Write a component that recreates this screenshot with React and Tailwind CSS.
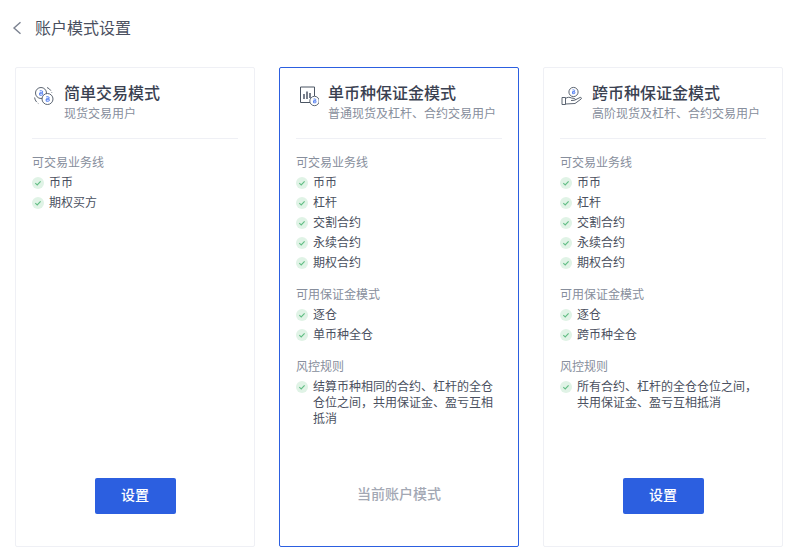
import React from 'react'

const CoinIcon = () => (
  <svg width="22" height="22" viewBox="0 0 22 22" fill="none" className="shrink-0">
    <circle cx="8" cy="8" r="5.5" stroke="#4b5563" strokeWidth="0.9" />
    <circle cx="14.5" cy="14" r="5.5" fill="#fff" stroke="#4b5563" strokeWidth="0.9" />
    <path d="M6.7 5.8h1.9a1 1 0 010 2.2H6.7m0 0h2.1a1 1 0 010 2.2H6.7z" stroke="#4f7cf0" strokeWidth="1" />
    <path d="M13.2 11.8h1.9a1 1 0 010 2.2h-1.9m0 0h2.1a1 1 0 010 2.2h-2.1z" stroke="#4f7cf0" strokeWidth="1" />
    <path d="M14 2.5a8 8 0 014.8 5.2M1.6 12.5a8 8 0 003.8 6" stroke="#4b5563" strokeWidth="0.9" strokeDasharray="5 1.5" />
  </svg>
)

const ChartIcon = () => (
  <svg width="22" height="22" viewBox="-2 0 22 22" fill="none" className="shrink-0">
    <path d="M12 17.5H1.5V2h14v9" stroke="#4b5563" strokeWidth="1" />
    <path d="M5 9v5M8 6.5v7.5M11 8v5" stroke="#6b7280" strokeWidth="1.8" />
    <circle cx="15.5" cy="16" r="4.7" fill="#fff" stroke="#4b5563" strokeWidth="0.9" />
    <path d="M14.5 14h1.5a.9.9 0 010 1.9h-1.5m0 0h1.7a.9.9 0 010 1.9h-1.7z" stroke="#4f7cf0" strokeWidth="0.9" />
  </svg>
)

const HandIcon = () => (
  <svg width="24" height="22" viewBox="0 0 24 22" fill="none" className="shrink-0">
    <circle cx="12.5" cy="7" r="4.6" stroke="#4b5563" strokeWidth="0.9" />
    <path d="M11.5 4.9h1.3a.9.9 0 010 1.9h-1.3m0 0h1.5a.9.9 0 010 1.9h-1.5z" stroke="#4f7cf0" strokeWidth="0.9" />
    <path d="M1 12.5h3.5v7H1z" stroke="#4b5563" strokeWidth="0.9" />
    <path d="M4.5 13.5c2-1.5 4-1.5 6-.5l3 .5c1 .3 1 1.7-.2 1.8l-3.3.2m4-.5l5-2.5c1.2-.5 2 .8 1 1.6l-6 4.4-9.5.5" stroke="#4b5563" strokeWidth="0.9" />
  </svg>
)

const Check = () => (
  <span className="mt-[2px] flex h-[12px] w-[12px] shrink-0 items-center justify-center rounded-full bg-[#e0f3e6]">
    <svg width="8" height="8" viewBox="0 0 8 8" fill="none">
      <path d="M1.3 4.2l1.9 1.7 3.4-3.6" stroke="#62bd84" strokeWidth="1.1" />
    </svg>
  </span>
)

const Section = ({ title, items }) => (
  <div className="mb-[12px]">
    <div className="text-[12px] leading-[20px] text-[#878e9c]">{title}</div>
    {items.map((item) => (
      <div key={item} className="flex gap-[5px] py-[2px] text-[12px] leading-[16px] text-[#4a5060]">
        <Check />
        <span>{item}</span>
      </div>
    ))}
  </div>
)

const modes = [
  {
    title: '简单交易模式',
    sub: '现货交易用户',
    icon: <CoinIcon />,
    sections: [{ title: '可交易业务线', items: ['币币', '期权买方'] }],
  },
  {
    title: '单币种保证金模式',
    sub: '普通现货及杠杆、合约交易用户',
    icon: <ChartIcon />,
    current: true,
    sections: [
      { title: '可交易业务线', items: ['币币', '杠杆', '交割合约', '永续合约', '期权合约'] },
      { title: '可用保证金模式', items: ['逐仓', '单币种全仓'] },
      { title: '风控规则', items: ['结算币种相同的合约、杠杆的全仓仓位之间，共用保证金、盈亏互相抵消'] },
    ],
  },
  {
    title: '跨币种保证金模式',
    sub: '高阶现货及杠杆、合约交易用户',
    icon: <HandIcon />,
    sections: [
      { title: '可交易业务线', items: ['币币', '杠杆', '交割合约', '永续合约', '期权合约'] },
      { title: '可用保证金模式', items: ['逐仓', '跨币种全仓'] },
      { title: '风控规则', items: ['所有合约、杠杆的全仓仓位之间，共用保证金、盈亏互相抵消'] },
    ],
  },
]

const App = () => {
  return (
    <div className="h-[556px] w-[797px] overflow-hidden bg-white font-['Liberation_Sans','Noto_Sans_CJK_SC',sans-serif]">
      <div className="flex h-[56px] items-center pl-[12px]">
        <svg width="10" height="14" viewBox="0 0 10 14" fill="none">
          <path d="M8.5 1.2L2 7l6.5 5.8" stroke="#7b8290" strokeWidth="1.4" />
        </svg>
        <span className="ml-[13px] pt-[1px] text-[16px] text-[#4a5060]">账户模式设置</span>
      </div>

      <div className="mt-[11px] flex gap-[24px] pl-[15px]">
        {modes.map((mode) => (
          <div
            key={mode.title}
            className={`flex h-[480px] w-[240px] flex-col rounded-[2px] border px-[16px] ${mode.current ? 'border-[#2c5fe0]' : 'border-[#eff0f5]'}`}
          >
            <div className="flex h-[71px] items-start border-b border-[#eff0f5] pt-[15px]">
              <div className="ml-[1px] mt-[2px] w-[31px]">{mode.icon}</div>
              <div className="whitespace-nowrap">
                <div className="text-[16px] font-medium leading-[22px] text-[#3a4151]">{mode.title}</div>
                <div className="text-[12px] leading-[18px] text-[#878e9c]">{mode.sub}</div>
              </div>
            </div>
            <div className="flex-1 pt-[14px]">
              {mode.sections.map((section) => (
                <Section key={section.title} title={section.title} items={section.items} />
              ))}
            </div>
            <div className="mb-[32px] flex h-[36px] items-center justify-center">
              {mode.current ? (
                <span className="pb-[4px] text-[14px] font-medium text-[#a3a8b4]">当前账户模式</span>
              ) : (
                <button className="h-[36px] w-[81px] rounded-[2px] bg-[#2c5fe0] pb-[2px] text-[14px] font-medium text-white">设置</button>
              )}
            </div>
          </div>
        ))}
      </div>
    </div>
  )
}

export default App
